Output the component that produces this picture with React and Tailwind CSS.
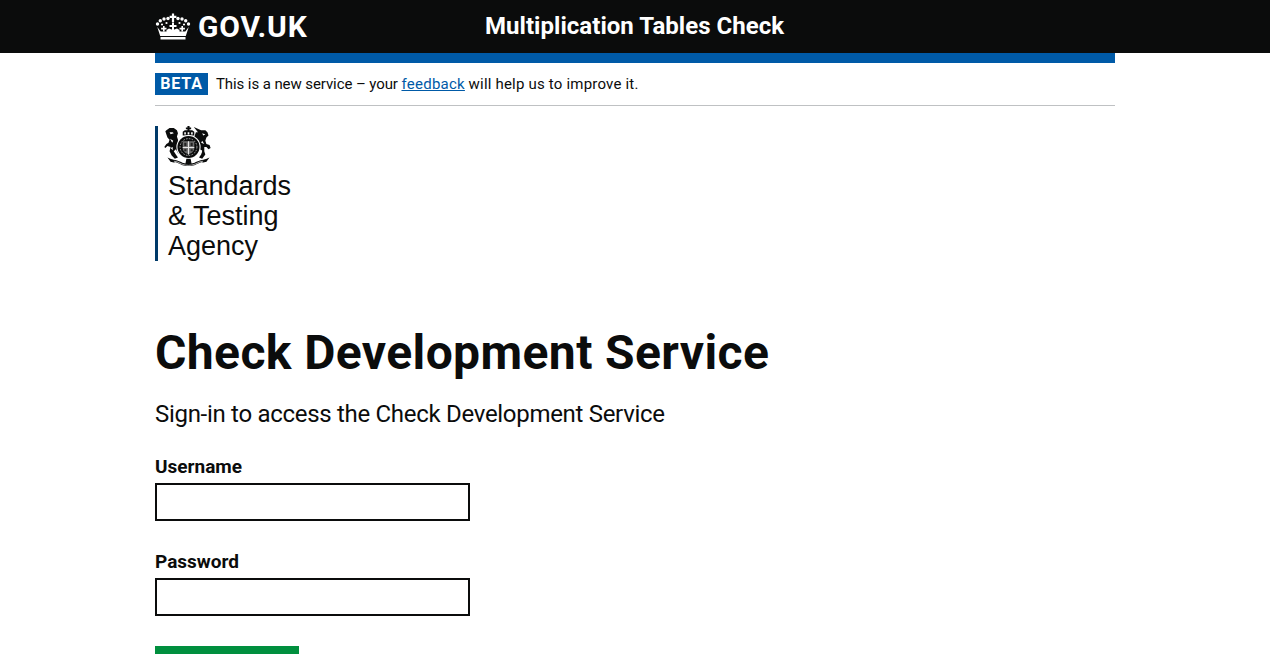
const gds = { fontFamily: 'Roboto, "Noto Sans", Arial, sans-serif' };

function Crown() {
  const dots = [[2,11],[4.800,7.800],[8.500,6],[12.500,5.500],[22.500,5.500],[26.500,6],[30.200,7.800],[33,11]];
  const small = [[6.500,11.500],[11,10],[24,10],[28.500,11.500]];
  return (
    <svg width="36" height="27" viewBox="0 0 35 27" fill="white" aria-hidden="true">
      {dots.map(([x, y], i) => <circle key={i} cx={x} cy={y} r="1.700" />)}
      {small.map(([x, y], i) => <circle key={i} cx={x} cy={y} r="1.100" />)}
      <path d="M16.400 0.500h2.200v2.300h2.300v2.200h-2.300v4h-2.200v-4h-2.300V2.800h2.300z" />
      <path d="M16.500 9.500h2v2.500h2.500v2h-2.500v3h-2v-3H14v-2h2.500z" />
      <path d="M7.500 13h1.600v1.800h1.900v1.600H9.100v2H7.500v-2H5.600v-1.600h1.900zM25.900 13h1.600v1.800h1.900v1.600h-1.900v2h-1.600v-2H24v-1.600h1.900z" />
      <path d="M1.800 14l3.400 4.400h24.600l3.400-4.400-2.900 9H4.700z" />
      <path d="M11 17l2.500-1.500 4 1.500 4-1.500L24 17v2H11z" />
      <rect x="5" y="24" width="25" height="2.500" />
    </svg>
  );
}

function Arms() {
  return (
    <svg width="49" height="40" viewBox="1.500 0 45 38" aria-hidden="true">
      <path fill="#0b0c0c" d="M3 4l3-2 4 0 3 2 1 3-1 3 1 3 1 4 1 5 2 4-1 2-3-2-2-4-2 2 2 3 2 3-3 1-3-3-2-4 1-4-3-1-2 2-1-1 2-3 2-1 1-3-2-2-1-3-1-3z" />
      <path fill="#fff" d="M6 6l3 0 1 1-3 .800zM6.500 12l3 2-1 2zM7 21l2-1 0 3z" />
      <path fill="#0b0c0c" d="M33 6l-4-5 7 3 4 0 2 2 1 3-2 2-1 3 1 3 3 1 1 3-2 1-2-2-2 0 0 4 1 3-3 4-3-1 2-3 1-3-2-2-2 4-3 2-1-2 2-4-1-5-1-5 1-3 1-3z" />
      <path fill="#fff" d="M37 7l3 1-2 1zM37 14l2 3-3-1zM35 23l2 0-1 3z" />
      <path fill="#0b0c0c" d="M23 0h2v1.500h1.500V3H25v1h2.500l2 1.500V9h-11V5.500l2-1.500H23V3h-1.500V1.500H23z" />
      <path fill="#fff" d="M20 6h1.500v2H20zM23.200 6h1.600v2h-1.600zM26.500 6H28v2h-1.500z" />
      <circle cx="24" cy="20" r="11.500" fill="#fff" />
      <circle cx="24" cy="20" r="10.500" fill="#0b0c0c" />
      <circle cx="24" cy="20" r="8" fill="none" stroke="#bbb" strokeWidth=".8" strokeDasharray="1.500 1.200" />
      <path fill="#6f6f6f" d="M18.500 14.500h11V21c0 3-2.500 5-5.500 6-3-1-5.500-3-5.500-6z" />
      <path fill="#e6e6e6" d="M23.500 14.500h1V27h-1zM18.500 20h11v1h-11z" />
      <path fill="#222" d="M20 16h2v3h-2zM26 22h2v2h-2z" />
      <path fill="#222" d="M26 16h2v3h-2zM20 22h2v2h-2z" />
      <path fill="none" stroke="#0b0c0c" strokeWidth="2.200" d="M7 33c4-1 7 1 11 3 4 1.500 8 1.500 12 0 4-2 7-4 11-3" />
      <path fill="none" stroke="#fff" strokeWidth=".6" d="M10 33.500c3 0 5 1.500 8 2.800 4 1.500 8 1.500 12 0 3-1.300 5-2.800 8-2.800" />
      <path fill="#0b0c0c" d="M4 30l5 2 2 3-4-1zM44 30l-5 2-2 3 4-1zM22 31h4l1 5h-6z" />
    </svg>
  );
}

export default function App() {
  return (
    <div className="h-[654px] overflow-hidden bg-white text-[#0b0c0c]" style={gds}>
      <header className="h-[53px] bg-[#0b0c0c] text-white">
        <div className="mx-auto flex h-full w-[960px] items-center">
          <a className="flex w-[330px] items-center gap-[7px]">
            <Crown />
            <span className="text-[30px] leading-none font-bold tracking-[0.8px]">GOV.UK</span>
          </a>
          <span className="-mt-[2px] text-[24px] leading-none font-bold tracking-[0.04px]">Multiplication Tables Check</span>
        </div>
      </header>
      <main className="mx-auto w-[960px]">
        <div className="h-[10px] bg-[#005aa7]"></div>
        <div className="flex items-center gap-2 border-b border-[#bfc1c3] pt-[10px] pb-[10px]">
          <strong className="h-[22px] w-[53px] bg-[#005aa7] text-center text-[16px] leading-[22px] font-bold tracking-[0.8px] text-white">BETA</strong>
          <p className="text-[15px] leading-[22px] tracking-[-0.09px]">
            This is a new service – your <a className="tracking-[0.25px] text-[#005aa7] underline">feedback</a> <span className="tracking-[0.2px]">will help us to improve it.</span>
          </p>
        </div>
        <div className="mt-5 h-[135px] w-[140px] border-l-[3px] border-[#003a69] pl-[10px]">
          <div className="-ml-[4px]"><Arms /></div>
          <div className="mt-[5px] text-[27px] leading-[30px]" style={{ fontFamily: '"Liberation Sans", Arial, sans-serif' }}>
            <div>Standards</div>
            <div>&amp; Testing</div>
            <div>Agency</div>
          </div>
        </div>
        <h1 className="mt-[61px] text-[48px] leading-[62px] font-bold tracking-[0.4px]">Check Development Service</h1>
        <p className="mt-[15px] text-[24px] leading-[30px] tracking-[-0.3px]">Sign-in to access the Check Development Service</p>
        <form className="mt-[25px]">
          <label className="block text-[19px] leading-[25px] font-bold">Username</label>
          <input className="mt-[4px] block h-[38px] w-[315px] border-2 border-[#0b0c0c] bg-white" type="text" aria-label="Username" />
          <label className="mt-[28px] block text-[19px] leading-[25px] font-bold">Password</label>
          <input className="mt-[4px] block h-[38px] w-[315px] border-2 border-[#0b0c0c] bg-white" type="password" aria-label="Password" />
          <button type="button" aria-label="Sign in" className="mt-[30px] block h-[38px] w-[144px] bg-[#008f3e]"></button>
        </form>
      </main>
    </div>
  );
}
